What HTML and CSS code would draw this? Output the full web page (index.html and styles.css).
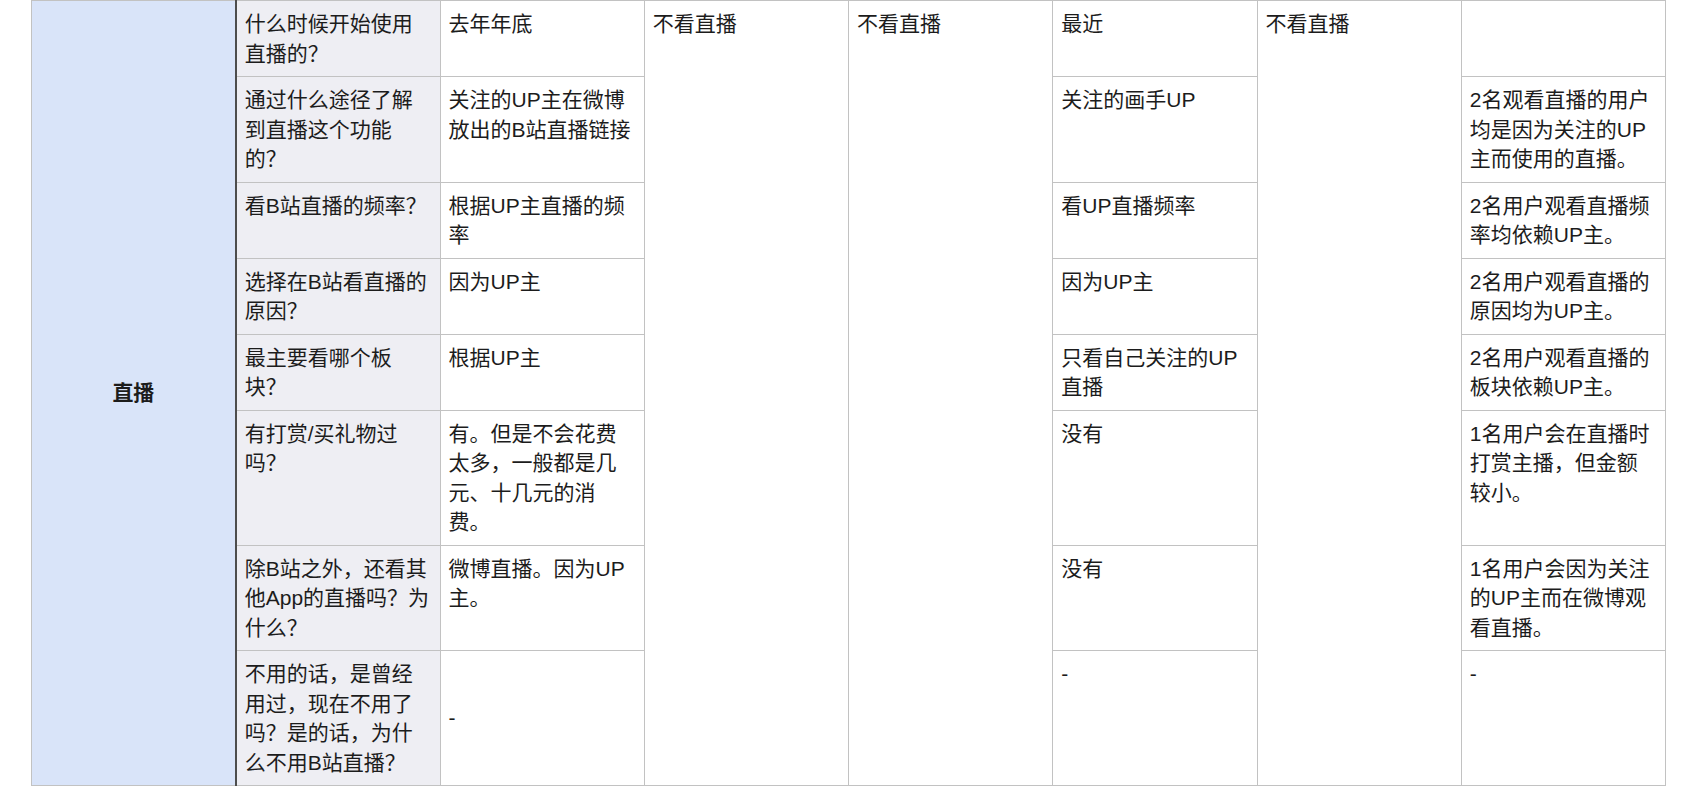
FILE: index.html
```html
<!DOCTYPE html>
<html lang="zh-CN">
<head>
<meta charset="utf-8">
<title>直播 调研</title>
<link rel="stylesheet" href="styles.css">
</head>
<body>
<table class="survey">
  <colgroup>
    <col class="c-topic"><col class="c-q"><col><col><col><col><col><col>
  </colgroup>
  <tbody>
    <tr>
      <td class="topic" rowspan="8">直播</td>
      <td class="q">什么时候开始使用直播的？</td>
      <td>去年年底</td>
      <td rowspan="8">不看直播</td>
      <td rowspan="8">不看直播</td>
      <td>最近</td>
      <td rowspan="8">不看直播</td>
      <td></td>
    </tr>
    <tr>
      <td class="q">通过什么途径了解到直播这个功能的？</td>
      <td>关注的UP主在微博放出的B站直播链接</td>
      <td>关注的画手UP</td>
      <td>2名观看直播的用户均是因为关注的UP主而使用的直播。</td>
    </tr>
    <tr>
      <td class="q">看B站直播的频率？</td>
      <td>根据UP主直播的频率</td>
      <td>看UP直播频率</td>
      <td>2名用户观看直播频率均依赖UP主。</td>
    </tr>
    <tr>
      <td class="q">选择在B站看直播的原因？</td>
      <td>因为UP主</td>
      <td>因为UP主</td>
      <td>2名用户观看直播的原因均为UP主。</td>
    </tr>
    <tr>
      <td class="q">最主要看哪个板块？</td>
      <td>根据UP主</td>
      <td>只看自己关注的UP直播</td>
      <td>2名用户观看直播的板块依赖UP主。</td>
    </tr>
    <tr>
      <td class="q">有打赏/买礼物过吗？</td>
      <td>有。但是不会花费太多，一般都是几元、十几元的消费。</td>
      <td>没有</td>
      <td>1名用户会在直播时打赏主播，但金额较小。</td>
    </tr>
    <tr>
      <td class="q">除B站之外，还看其他App的直播吗？为什么？</td>
      <td>微博直播。因为UP主。</td>
      <td>没有</td>
      <td>1名用户会因为关注的UP主而在微博观看直播。</td>
    </tr>
    <tr>
      <td class="q">不用的话，是曾经用过，现在不用了吗？是的话，为什么不用B站直播？</td>
      <td class="mid">-</td>
      <td>-</td>
      <td>-</td>
    </tr>
  </tbody>
</table>
</body>
</html>
```
FILE: styles.css
```css
html, body {
  margin: 0;
  padding: 0;
  background: #ffffff;
}

body {
  font-family: "Liberation Sans", "Noto Sans CJK SC", sans-serif;
  font-size: 21px;
  line-height: 29.5px;
  color: #1c1c1c;
}

.survey {
  border-collapse: collapse;
  table-layout: fixed;
  width: 1635px;
  margin: 0 0 0 31px;
}

.survey td {
  border: 1px solid #c2c2c2;
  padding: 8px 8px;
  vertical-align: top;
  text-align: left;
  word-break: normal;
  line-break: strict;
}

.survey td.topic {
  background: #d9e4f9;
  font-weight: bold;
  text-align: center;
  vertical-align: middle;
  border-right: 2px solid #4d4d4d;
}

.survey td.q {
  background: #eeeef3;
}

.survey td.mid {
  vertical-align: middle;
}
```
